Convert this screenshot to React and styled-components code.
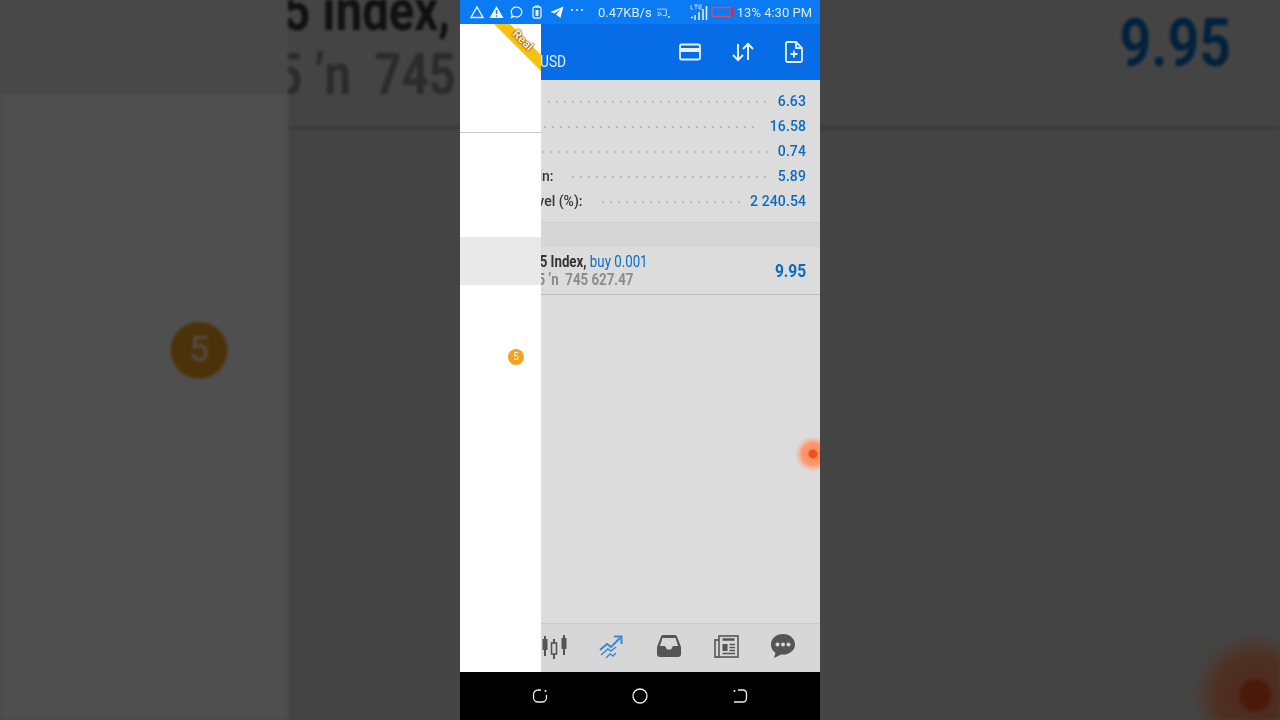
import React from "react";
import styled, { createGlobalStyle } from "styled-components";

const Global = createGlobalStyle`
  html, body { margin: 0; padding: 0; background: #454545; }
  #root { width: 1280px; height: 720px; overflow: hidden; }
`;

const Stage = styled.div`
  position: relative;
  width: 1280px;
  height: 720px;
  overflow: hidden;
  display: flex;
  justify-content: center;
  font-family: Roboto, "Liberation Sans", sans-serif;
`;

const Backdrop = styled.div`
  position: absolute;
  inset: 0;
  overflow: hidden;
  filter: brightness(0.31) blur(1.5px);
`;

const BackdropScale = styled.div`
  width: 360px;
  height: 720px;
  transform-origin: 0 0;
  transform: translateY(-919px) scale(3.5556);
`;

const Foreground = styled.div`
  position: relative;
  width: 360px;
  height: 720px;
  filter: blur(0.35px);
`;

const Screen = styled.div`
  position: relative;
  width: 360px;
  height: 720px;
  overflow: hidden;
  display: flex;
  flex-direction: column;
  background: #dcdcdc;
`;

const StatusBar = styled.div`
  height: 24px;
  flex: none;
  display: flex;
  align-items: center;
  background: #0a7af5;
  color: #dcebff;
  font-size: 13px;
  padding: 0 8px 0 9px;
  box-sizing: border-box;
  white-space: nowrap;
`;

const StatusIcons = styled.div`
  display: flex;
  align-items: center;
  gap: 5px;
`;

const IconSlot = styled.span`
  width: 15px;
  height: 14px;
  display: flex;
  justify-content: center;
`;

const Speed = styled.span`
  margin: 0 5px 0 14px;
`;

const StatusRight = styled.div`
  margin-left: auto;
  display: flex;
  align-items: center;
  gap: 3px;
`;

const Header = styled.header`
  height: 56px;
  flex: none;
  display: flex;
  background: #066de6;
  color: #fff;
  box-sizing: border-box;
  padding-right: 17px;
`;

const Currency = styled.div`
  padding: 28px 0 0 80px;
  font-size: 16px;
  transform-origin: 80px 0;
  transform: scaleX(0.86);
  color: #e3efff;
`;

const HeaderActions = styled.div`
  margin-left: auto;
  display: flex;
  align-items: center;
  gap: 31px;
  padding-bottom: 0;
`;

const Summary = styled.section`
  padding-top: 8px;
  height: 142px;
  box-sizing: border-box;
  flex: none;
`;

const SummaryRow = styled.div`
  height: 25px;
  display: flex;
  align-items: center;
  padding: 0 14px 0 15px;
  font-size: 14px;
  font-weight: 500;
  color: #383838;
  white-space: nowrap;
`;

const Dots = styled.span`
  flex: 1;
  height: 2px;
  margin: 3px 10px 0 19px;
  background-image: radial-gradient(circle at 1px 1px, #bdbdbd 0.8px, transparent 1.1px);
  background-size: 8px 2px;
  background-repeat: repeat-x;
`;

const Amount = styled.span`
  color: #0a6cc0;
  font-size: 14px;
  font-weight: 500;
  letter-spacing: 0.1px;
`;

const Band = styled.div`
  height: 25px;
  flex: none;
  box-sizing: border-box;
  background: #d6d6d6;
  border-top: 1px solid #cfcfcf;
`;

const Position = styled.div`
  height: 48px;
  flex: none;
  box-sizing: border-box;
  display: flex;
  align-items: center;
  justify-content: space-between;
  padding: 0 14px 0 16px;
  border-bottom: 1px solid #bdbdbd;
`;

const PositionText = styled.div`
  display: flex;
  flex-direction: column;
  transform-origin: 0 50%;
  transform: scaleX(0.83);
  font-size: 16px;
  line-height: 18px;
  font-weight: 500;
  white-space: pre;
`;

const Symbol = styled.span`
  color: #333;
  font-weight: 700;
`;

const Side = styled.span`
  color: #0a6cc0;
  font-weight: 400;
`;

const Prices = styled.span`
  color: #8b8b8b;
  font-weight: 700;
  padding-left: 74px;
`;

const Profit = styled.span`
  color: #0a6cc0;
  font-size: 19px;
  font-weight: 700;
  transform-origin: 100% 50%;
  transform: scaleX(0.82);
`;

const Spacer = styled.div`
  flex: 1;
`;

const BottomNav = styled.nav`
  height: 49px;
  flex: none;
  box-sizing: border-box;
  border-top: 1px solid #cbcbcb;
  background: #d7d7d7;
  display: flex;
  align-items: center;
  justify-content: flex-end;
  gap: 31px;
  padding: 0 24px 4px 0;
`;

const SystemBar = styled.div`
  height: 48px;
  flex: none;
  background: #000;
  display: flex;
  align-items: center;
  justify-content: center;
  gap: 84px;
`;

const Drawer = styled.aside`
  position: absolute;
  left: 0;
  top: 24px;
  width: 81px;
  height: 648px;
  background: #fff;
  overflow: hidden;
`;

const DrawerHead = styled.div`
  height: 109px;
  box-sizing: border-box;
  border-bottom: 1px solid #c9c9c9;
`;

const Ribbon = styled.div`
  position: absolute;
  left: 0;
  top: 0;
  width: 81px;
  height: 47px;
  background: #f6c210;
  clip-path: polygon(34px 0, 50px 0, 81px 31px, 81px 47px);
`;

const RibbonLabel = styled.span`
  position: absolute;
  left: 51px;
  top: 9px;
  font-size: 12px;
  line-height: 14px;
  font-weight: 700;
  color: #fff3e0;
  transform: rotate(45deg);
  text-shadow: 0 0 2px #a64b00, 0 0 2px #a64b00, 0 0 1px #a64b00;
`;

const Menu = styled.div`
  padding-top: 8px;
`;

const MenuRow = styled.div`
  height: 48px;
  display: flex;
  align-items: center;
  justify-content: flex-end;
  padding-right: 17px;
  background: ${(p) => (p.$active ? "#e9e9e9" : "transparent")};
`;

const Counter = styled.span`
  width: 16px;
  height: 16px;
  border-radius: 50%;
  background: #f5a21f;
  color: #fff;
  font-size: 10px;
  line-height: 16px;
  text-align: center;
`;

const Floating = styled.div`
  position: absolute;
  left: 335px;
  top: 436px;
  width: 36px;
  height: 36px;
  border-radius: 50%;
  background: radial-gradient(circle, #f0501e 0 4px, #fb8d5e 5px, #fb9a70 11px, rgba(250, 170, 130, 0.45) 15px, rgba(250, 170, 130, 0) 18px);
`;

const I = ({ w = 16, h = 16, vb, children }) => (
  <svg width={w} height={h} viewBox={vb || `0 0 ${w} ${h}`} fill="none" xmlns="http://www.w3.org/2000/svg">
    {children}
  </svg>
);

const StatusGlyphs = () => (
  <StatusIcons>
    <IconSlot><I w={14} h={14}><path d="M7 2 L13 12.5 H1 Z" stroke="#e6f0ff" strokeWidth="1.4" /></I></IconSlot>
    <IconSlot><I w={15} h={14}><path d="M7.5 1 L14.5 13 H.5 Z" fill="#eef5ff" /><path d="M7.5 5v4M7.5 10.3v1.4" stroke="#0a78f2" strokeWidth="1.4" /></I></IconSlot>
    <IconSlot><I w={13} h={14}><path d="M6.5 2a5.3 5 0 1 1-2.700 9.300L1.500 12.500l.6-2.700A5 5 0 0 1 6.500 2Z" stroke="#e6f0ff" strokeWidth="1.300" /></I></IconSlot>
    <IconSlot><I w={10} h={14}><rect x="1" y="2" width="8" height="11" rx="1.500" stroke="#e6f0ff" strokeWidth="1.300" /><rect x="3.500" y="5" width="3" height="6" fill="#e6f0ff" /><rect x="3" y=".5" width="4" height="1.500" fill="#e6f0ff" /></I></IconSlot>
    <IconSlot><I w={14} h={14}><path d="M13.500 1.500 L.5 7 L4.500 8.600 L10.500 4.500 L6 9.600 L10.500 13 Z" fill="#eef5ff" /></I></IconSlot>
    <IconSlot><I w={14} h={14}><circle cx="2" cy="5" r="1.100" fill="#e6f0ff" /><circle cx="7" cy="5" r="1.100" fill="#e6f0ff" /><circle cx="12" cy="5" r="1.100" fill="#e6f0ff" /></I></IconSlot>
  </StatusIcons>
);

const Phone = () => (
  <Screen>
    <StatusBar>
      <StatusGlyphs />
      <Speed>0.47KB/s</Speed>
      <I w={14} h={14}><path d="M1 4V3h12v9H8M1 7a5 5 0 0 1 5 5M1 9.500A2.500 2.500 0 0 1 3.500 12" stroke="#dcebff" strokeWidth="1.200" /><circle cx="1.500" cy="12" r="1" fill="#dcebff" /></I>
      <StatusRight>
        <I w={20} h={14}><circle cx="2" cy="12" r="1" fill="#e6f0ff" /></I>
        <I w={18} h={20}><path d="M1 15.500h2M5 13v5M9 10v8M13 7v11M16.500 4v14" stroke="#dcebff" strokeWidth="1.600" /><path d="M1 3v4h2M4 3h4M6 3v4M9 3h3M9 5h3M9 7h3M9 3v4" stroke="#dcebff" strokeWidth=".8" /></I>
        <I w={23} h={12}><rect x="1" y="1.500" width="19" height="9" rx="1.500" stroke="#d84a6a" strokeWidth="1.300" /><rect x="20" y="1.500" width="2.500" height="9" fill="#d4264a" /></I>
        <span>13% 4:30 PM</span>
      </StatusRight>
    </StatusBar>
    <Header>
      <Currency>USD</Currency>
      <HeaderActions>
        <I w={22} h={18}><rect x="1" y="1.500" width="20" height="15" rx="1.500" stroke="#e8f1ff" strokeWidth="1.800" /><rect x="1" y="5" width="20" height="4" fill="#e8f1ff" /></I>
        <I w={22} h={22}><path d="M6 3v16M1 14l5 5 5-5M16 19V3M11 8l5-5 5 5" stroke="#e8f1ff" strokeWidth="2" /></I>
        <I w={18} h={22}><path d="M2.500 1h8.500l6 6v12.500a1.500 1.500 0 0 1-1.500 1.500h-13A1.500 1.500 0 0 1 1 19.500V2.500A1.500 1.500 0 0 1 2.500 1Z" stroke="#e8f1ff" strokeWidth="1.800" /><path d="M11 1v6h6M9 9.500v7M5.500 13h7" stroke="#e8f1ff" strokeWidth="1.800" /></I>
      </HeaderActions>
    </Header>
    <Summary>
      {[
        ["Balance:", "6.63"],
        ["Equity:", "16.58"],
        ["Margin:", "0.74"],
        ["Free Margin:", "5.89"],
        ["Margin Level (%):", "2 240.54"],
      ].map(([label, value]) => (
        <SummaryRow key={label}>
          <span>{label}</span>
          <Dots />
          <Amount>{value}</Amount>
        </SummaryRow>
      ))}
    </Summary>
    <Band />
    <Position>
      <PositionText>
        <span><Symbol>Volatility 75 Index, </Symbol><Side>buy 0.001</Side></span>
        <Prices>{"5 ʼn  745 627.47"}</Prices>
      </PositionText>
      <Profit>9.95</Profit>
    </Position>
    <Spacer />
    <BottomNav>
      <I w={26} h={26}>
        <path d="M3 3v20M12 6v20M22 2v20" stroke="#555" strokeWidth="2" />
        <rect x="0.500" y="6" width="5" height="11" fill="#555" />
        <rect x="9.500" y="10" width="5" height="11" fill="#d7d7d7" stroke="#555" strokeWidth="1.600" />
        <rect x="19.500" y="5" width="5" height="11" fill="#555" />
      </I>
      <I w={26} h={26}>
        <path d="M1 17l7-6 4 3 9-9M15 3.500h7.500V11" stroke="#3b86d6" strokeWidth="2" />
        <path d="M2 22l7-6 3 2 5-4M7 25l4-4 3 2 3-3" stroke="#3b86d6" strokeWidth="1.500" />
      </I>
      <I w={26} h={24}>
        <path d="M1 13L5 2.500a2 2 0 0 1 2-1.500h12a2 2 0 0 1 2 1.500L25 13v7a3 3 0 0 1-3 3H4a3 3 0 0 1-3-3Z" fill="#555" />
        <path d="M6.500 4h13l2.500 8h-5l-2 3.500h-4L9 12H4Z" fill="#d7d7d7" />
      </I>
      <I w={26} h={24}>
        <rect x="6" y="2" width="19" height="21" stroke="#666" strokeWidth="1.800" fill="none" />
        <path d="M6 6H2v17h5" stroke="#666" strokeWidth="1.800" />
        <path d="M9.500 5.500h12" stroke="#555" strokeWidth="2.500" />
        <rect x="9.500" y="10" width="5" height="7" fill="#555" />
        <path d="M16.500 10.500H22M16.500 13.500H22M16.500 16.500H22M9.500 19.500H22" stroke="#555" strokeWidth="1.500" />
      </I>
      <I w={26} h={26}>
        <path d="M13 1C6 1 1 5.500 1 11.500c0 3.500 1.700 6.500 4.500 8.500L4 25l7-3.500c.7.100 1.300.100 2 .100 7 0 12-4.600 12-10.100S20 1 13 1Z" fill="#555" />
        <circle cx="7.500" cy="11.500" r="2" fill="#d7d7d7" /><circle cx="13" cy="11.500" r="2" fill="#d7d7d7" /><circle cx="18.500" cy="11.500" r="2" fill="#d7d7d7" />
      </I>
    </BottomNav>
    <SystemBar>
      <I w={16} h={16}><path d="M9 2H6A4.500 4.500 0 0 0 1.500 6.500v3A4.500 4.500 0 0 0 6 14h4a4.500 4.500 0 0 0 4.500-4.500V7" stroke="#eee" strokeWidth="1.300" /><circle cx="13.500" cy="3" r="1" fill="#eee" /></I>
      <I w={16} h={16}><circle cx="8" cy="8" r="7" stroke="#eee" strokeWidth="1.300" /></I>
      <I w={16} h={16}><path d="M6 2h5a3.500 3.500 0 0 1 3.500 3.500v5A3.500 3.500 0 0 1 11 14H2" stroke="#eee" strokeWidth="1.300" /><circle cx="2.500" cy="3" r="1" fill="#eee" /></I>
    </SystemBar>
    <Drawer>
      <DrawerHead />
      <Ribbon />
      <RibbonLabel>Real</RibbonLabel>
      <Menu>
        {[0, 1, 2, 3, 4].map((i) => (
          <MenuRow key={i} $active={i === 2}>
            {i === 4 && <Counter>5</Counter>}
          </MenuRow>
        ))}
      </Menu>
    </Drawer>
    <Floating />
  </Screen>
);

export default function App() {
  return (
    <>
      <Global />
      <Stage>
        <Backdrop aria-hidden="true">
          <BackdropScale>
            <Phone />
          </BackdropScale>
        </Backdrop>
        <Foreground>
          <Phone />
        </Foreground>
      </Stage>
    </>
  );
}
